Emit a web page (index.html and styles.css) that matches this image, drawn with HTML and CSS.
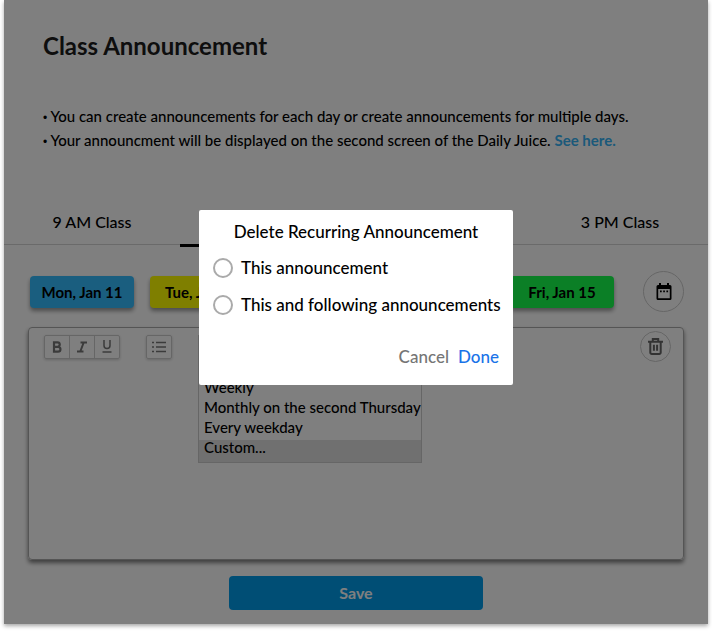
FILE: index.html
```html
<!DOCTYPE html>
<html lang="en">
<head>
<meta charset="utf-8">
<meta name="viewport" content="width=device-width, initial-scale=1.0">
<title>Class Announcement</title>
<link rel="stylesheet" href="styles.css">
</head>
<body>
<div class="page">
  <main class="content">
    <header class="intro">
      <h1>Class Announcement</h1>
      <p><span class="dot">•</span> You can create announcements for each day or create announcements for multiple days.</p>
      <p><span class="dot">•</span> Your announcment will be displayed on the second screen of the Daily Juice. <a href="#">See here.</a></p>
    </header>

    <nav class="tabs">
      <button class="tab">9 AM Class</button>
      <button class="tab active" aria-label="11 AM Class"></button>
      <button class="tab" aria-label="1 PM Class"></button>
      <button class="tab">3 PM Class</button>
    </nav>

    <div class="days">
      <button class="day blue">Mon, Jan 11</button>
      <button class="day yellow">Tue, Jan 12</button>
      <button class="day yellow" aria-label="Wed, Jan 13"></button>
      <button class="day green" aria-label="Thu, Jan 14"></button>
      <button class="day green">Fri, Jan 15</button>
      <button class="round calendar" aria-label="Pick a date">
        <svg width="16" height="18" viewBox="0 0 16 18">
          <path d="M3 0h2v2h6V0h2v2h1a1.500 1.500 0 0 1 1.500 1.500v12A1.500 1.500 0 0 1 14 17H2a1.500 1.500 0 0 1-1.500-1.500v-12A1.500 1.500 0 0 1 2 2h1zM2.200 6v9.300h11.600V6z"/>
          <path d="M4 7.500h1.700v1.700H4zM7.200 7.500h1.700v1.700H7.200zM10.400 7.500h1.700v1.700h-1.700z"/>
        </svg>
      </button>
    </div>

    <section class="editor">
      <div class="toolbar">
        <div class="tools">
          <button aria-label="Bold">
            <svg width="10" height="12" viewBox="0 0 10 12" fill="none" stroke="#777" stroke-width="2.200"><path d="M2 1.300h3.500a2.200 2.200 0 0 1 0 4.500H2zM2 5.800h4a2.400 2.400 0 0 1 0 4.900H2z"/></svg>
          </button>
          <button aria-label="Italic">
            <svg width="10" height="12" viewBox="0 0 10 12" fill="none" stroke="#777" stroke-width="2"><path d="M3.500 1.500H10M0 10.500h6.500M6.700 1.500l-3.400 9"/></svg>
          </button>
          <button aria-label="Underline">
            <svg width="10" height="13" viewBox="0 0 10 13" fill="none" stroke="#777" stroke-width="1.500"><path d="M2 0v5.500a3 3 0 0 0 6 0V0M.5 12h9"/></svg>
          </button>
        </div>
        <div class="tools">
          <button aria-label="Bulleted list">
            <svg width="14" height="12" viewBox="0 0 14 12" fill="none" stroke="#777" stroke-width="1.500"><path d="M0 1.500h2M0 6h2M0 10.500h2M4 1.500h10M4 6h10M4 10.500h10"/></svg>
          </button>
        </div>
        <div class="repeat">
          <button class="repeat-toggle" aria-label="Repeat"></button>
          <ul class="repeat-menu">
            <li aria-label="Daily"></li>
            <li>Weekly</li>
            <li>Monthly on the second Thursday</li>
            <li>Every weekday</li>
            <li class="selected">Custom...</li>
          </ul>
        </div>
        <button class="round trash" aria-label="Delete">
          <svg width="15" height="17" viewBox="0 0 15 17" fill="none" stroke="#666" stroke-width="2">
            <path d="M0 3.700h15M4.800 3.500V1h5.400v2.500M2.300 4v10.500a1.400 1.400 0 0 0 1.400 1.400h7.600a1.400 1.400 0 0 0 1.400-1.400V4M5.900 6.800v6M9.100 6.800v6"/>
          </svg>
        </button>
      </div>
    </section>

    <button class="save">Save</button>
  </main>

  <div class="overlay">
    <form class="modal" role="dialog" aria-labelledby="modal-title">
      <h2 id="modal-title">Delete Recurring Announcement</h2>
      <label><input type="radio" name="scope" value="one">This announcement</label>
      <label><input type="radio" name="scope" value="following">This and following announcements</label>
      <div class="actions">
        <button type="button" class="cancel">Cancel</button>
        <button type="button" class="done">Done</button>
      </div>
    </form>
  </div>
</div>
</body>
</html>
```
FILE: styles.css
```css
* { box-sizing: border-box; }
body {
  margin: 0;
  padding: 0 4px 8px;
  background: #fff;
  color: #000;
  font-family: Lato, "Liberation Sans", sans-serif;
  font-size: 15px;
  font-weight: 500;
}
h1, h2, p, ul { margin: 0; padding: 0; }
button {
  padding: 0;
  border: none;
  background: none;
  color: inherit;
  font: inherit;
  cursor: pointer;
}
svg { display: block; }

.page { position: relative; box-shadow: 0 2px 4px rgba(0,0,0,0.35); }
.content { padding: 32px 0 14px; background: #fff; }

.intro { padding: 0 39px; line-height: 24px; }
h1 { margin-bottom: 44px; color: #1c1c1c; font-size: 24px; font-weight: 700; line-height: 28px; }
.dot { font-family: "Liberation Sans", sans-serif; font-size: 12px; line-height: 1; }
.intro a { color: #36b3f5; font-weight: 700; text-decoration: none; }

.tabs { display: grid; grid-template-columns: repeat(4, 1fr); margin-top: 48px; border-bottom: 1px solid #d4d4d4; }
.tab { height: 44px; padding-bottom: 2px; font-size: 16px; }
.tab.active { box-shadow: 0 3px 0 #000; }

.days { display: flex; align-items: center; gap: 16px; padding: 26px 24px 0 26px; }
.day {
  flex: 0 1 104px;
  height: 32px;
  border-radius: 4px;
  font-size: 15px;
  font-weight: 700;
  white-space: nowrap;
  box-shadow: 0 3px 4px rgba(0,0,0,0.4);
}
.blue { background: #34bdff; }
.yellow { background: #ff0; }
.green { background: #16ff4c; }
.round { display: flex; align-items: center; justify-content: center; margin-left: auto; border: 1px solid #ccc; border-radius: 50%; }
.calendar { width: 41px; height: 41px; }

.editor {
  height: 233px;
  margin: 15px 24px 0;
  padding: 3px 12px 0 15px;
  border: 1px solid #aaa;
  border-radius: 4px;
  box-shadow: 0 3px 4px rgba(0,0,0,0.5);
}
.toolbar { display: flex; align-items: center; gap: 26px; }
.tools { display: flex; border: 1px solid #ccc; border-radius: 2px; box-shadow: 0 1px 3px rgba(0,0,0,0.2); }
.tools button { display: flex; align-items: center; justify-content: center; width: 24px; height: 22px; }
.tools button + button { width: 25px; border-left: 1px solid #ccc; }
.repeat { position: relative; width: 224px; }
.repeat-toggle { display: block; width: 100%; height: 24px; border: 1px solid #ccc; }
.repeat-menu {
  position: absolute;
  top: 24px;
  left: 0;
  width: 100%;
  border: 1px solid #ccc;
  background: #fff;
  line-height: 14px;
  list-style: none;
  white-space: nowrap;
}
.repeat-menu li { min-height: 14px; padding-left: 5px; }
.repeat-menu li + li { margin-top: 6px; }
.repeat-menu .selected { padding-bottom: 8px; background: #e0e0e0; }
.trash { width: 31px; height: 31px; }

.save {
  display: block;
  width: 36%;
  height: 34px;
  margin: 16px auto 0;
  padding-bottom: 2px;
  border-radius: 4px;
  background: #009ceb;
  color: #fff;
  font-size: 16px;
  font-weight: 700;
}

.overlay {
  position: absolute;
  inset: 0;
  display: flex;
  align-items: center;
  justify-content: center;
  padding-bottom: 29px;
  background: rgba(0,0,0,0.5);
}
.modal { width: 314px; padding: 11px 14px 17px; border-radius: 2px; background: #fff; font-size: 17px; line-height: 22px; }
.modal h2 { margin-bottom: 14px; font-size: 17px; font-weight: 500; text-align: center; }
.modal label { display: flex; align-items: center; gap: 8px; margin-bottom: 15px; white-space: nowrap; }
.modal input { appearance: none; flex: none; width: 20px; height: 20px; margin: 0; border: 2px solid #aaa; border-radius: 50%; }
.actions { display: flex; justify-content: flex-end; gap: 9px; padding-top: 15px; }
.cancel { color: #757575; }
.done { color: #1a73e8; }
```
